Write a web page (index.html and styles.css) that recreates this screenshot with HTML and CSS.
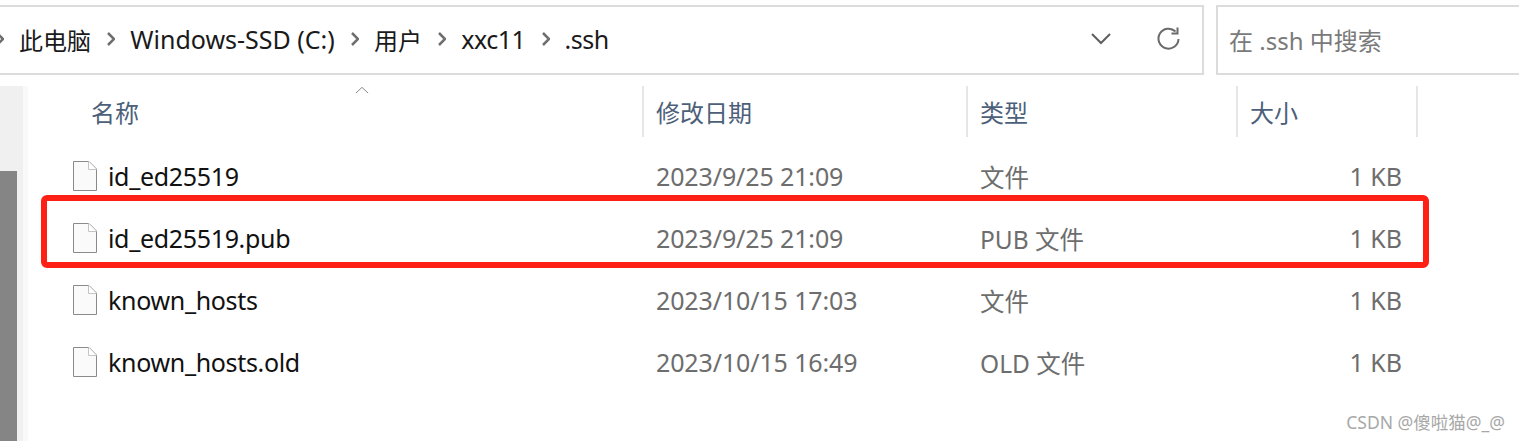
FILE: index.html
```html
<!DOCTYPE html>
<html lang="en">

<head>
    <meta charset="UTF-8">
    <title>.ssh</title>
    <link rel="stylesheet" href="styles.css">
</head>

<body>
    <svg class="defs" width="0" height="0">
        <symbol id="file-icon" viewBox="0 0 24 30">
            <path d="M1 .5H16L23.5 8V29.500H.5V.5Z" fill="#fafafa" stroke="#8a8a8a" />
            <path d="M15.500 .5V8.500H23.500" fill="#fff" stroke="#c4c4c4" />
        </symbol>
    </svg>

    <header class="toolbar">
        <div class="address">
            <svg class="crumb-arrow first" viewBox="0 0 8 14"><path d="M1 1L7 7L1 13" /></svg>
            <span class="crumb cjk">此电脑</span>
            <svg class="crumb-arrow" viewBox="0 0 8 14"><path d="M1 1L7 7L1 13" /></svg>
            <span class="crumb">Windows-SSD (C:)</span>
            <svg class="crumb-arrow" viewBox="0 0 8 14"><path d="M1 1L7 7L1 13" /></svg>
            <span class="crumb cjk">用户</span>
            <svg class="crumb-arrow" viewBox="0 0 8 14"><path d="M1 1L7 7L1 13" /></svg>
            <span class="crumb tight">xxc11</span>
            <svg class="crumb-arrow" viewBox="0 0 8 14"><path d="M1 1L7 7L1 13" /></svg>
            <span class="crumb tight">.ssh</span>
            <svg class="chevron" viewBox="0 0 20 12"><path d="M1 1L10 10L19 1" /></svg>
            <svg class="refresh" viewBox="0 0 24 24">
                <path d="M21.500 12A10 10 0 1 1 18.500 4.500" />
                <path d="M20.500 .5V6.500H14.500" />
            </svg>
        </div>
        <div class="search">在 .ssh 中搜索</div>
    </header>

    <div class="main">
        <aside class="side">
            <div class="scroll-track">
                <div class="scroll-thumb"></div>
            </div>
        </aside>

        <section class="files">
            <div class="sort-mark">
                <svg viewBox="0 0 16 8"><path d="M1 7.500L8 1L15 7.500" /></svg>
            </div>
            <div class="row head">
                <div class="col name">名称</div>
                <div class="col date">修改日期</div>
                <div class="col type">类型</div>
                <div class="col size">大小</div>
            </div>
            <div class="row item">
                <div class="col name"><svg class="file"><use href="#file-icon" /></svg>id_ed25519</div>
                <div class="col date">2023/9/25 21:09</div>
                <div class="col type">文件</div>
                <div class="col size">1 KB</div>
            </div>
            <div class="row item">
                <div class="col name"><svg class="file"><use href="#file-icon" /></svg>id_ed25519.pub</div>
                <div class="col date">2023/9/25 21:09</div>
                <div class="col type">PUB 文件</div>
                <div class="col size">1 KB</div>
            </div>
            <div class="row item">
                <div class="col name"><svg class="file"><use href="#file-icon" /></svg>known_hosts</div>
                <div class="col date">2023/10/15 17:03</div>
                <div class="col type">文件</div>
                <div class="col size">1 KB</div>
            </div>
            <div class="row item">
                <div class="col name"><svg class="file"><use href="#file-icon" /></svg>known_hosts.old</div>
                <div class="col date">2023/10/15 16:49</div>
                <div class="col type">OLD 文件</div>
                <div class="col size">1 KB</div>
            </div>
        </section>
    </div>

    <!-- red highlight drawn over the second row -->
    <div class="highlight"></div>
    <div class="watermark">CSDN @傻啦猫@_@</div>
</body>

</html>
```

FILE: styles.css
```css
/* Reset styles */
* {
    margin: 0;
    padding: 0;
    box-sizing: border-box;
}

body {
    width: 1519px;
    height: 441px;
    overflow: hidden;
    position: relative;
    background-color: #fff;
    font-family: "Noto Sans", "Noto Sans CJK SC", sans-serif;
    font-size: 25px;
}

.defs {
    position: absolute;
}

/* Toolbar */
.toolbar {
    display: flex;
    height: 86px;
    padding-top: 5px;
    gap: 12px;
}

.address {
    display: flex;
    align-items: center;
    width: 1204px;
    height: 70px;
    padding-bottom: 2px;
    border: 2px solid #dcdcdc;
    border-left: none;
    color: #1a1a1a;
}

.crumb {
    white-space: nowrap;
}

.crumb.cjk {
    font-size: 24px;
}

.crumb.tight {
    letter-spacing: -0.5px;
}

.crumb-arrow {
    width: 8px;
    height: 14px;
    margin: 0 15px 0 16.250px;
    flex: none;
}

.crumb-arrow.first {
    margin: 0 15px 0 -4px;
}

.crumb-arrow path {
    fill: none;
    stroke: #6e6e6e;
    stroke-width: 2.500;
}

.chevron {
    width: 20px;
    height: 12px;
    margin-left: auto;
    flex: none;
}

.chevron path {
    fill: none;
    stroke: #5f5f5f;
    stroke-width: 2;
}

.refresh {
    width: 24px;
    height: 24px;
    margin: 0 21px 0 46px;
    flex: none;
}

.refresh path {
    fill: none;
    stroke: #6a6a6a;
    stroke-width: 2;
}

.search {
    flex: 1;
    display: flex;
    align-items: center;
    height: 70px;
    padding: 0 0 2px 11px;
    border: 2px solid #dcdcdc;
    border-right: none;
    color: #7a7a7a;
    white-space: pre;
    font-size: 24px;
}

/* Main area */
.main {
    display: flex;
    height: 355px;
}

.side {
    width: 28px;
    flex: none;
    border-right: 5px solid #f9f9f9;
}

.scroll-track {
    height: 100%;
    padding-top: 85px;
    background-color: #f0f0f0;
}

.scroll-thumb {
    width: 17px;
    height: 100%;
    background-color: #858585;
}

.files {
    flex: 1;
    position: relative;
}

.sort-mark {
    position: absolute;
    left: 327px;
    top: 0;
    width: 14px;
    height: 8px;
}

.sort-mark svg {
    display: block;
    width: 14px;
    height: 8px;
}

.sort-mark path {
    fill: none;
    stroke: #777;
    stroke-width: 1;
}

.row {
    display: flex;
    align-items: center;
}

.col {
    display: flex;
    align-items: center;
    white-space: nowrap;
    height: 100%;
}

.name {
    width: 614px;
    padding-left: 45px;
}

.date {
    width: 324px;
    padding-left: 12px;
}

.type {
    width: 270px;
    padding-left: 12px;
}

.size {
    width: 182px;
    padding: 0 16px 0 12px;
}

.head {
    height: 51px;
    margin-bottom: 8px;
    color: #4c607a;
    font-size: 24px;
}

.head .col {
    border-left: 2px solid #e6e6e6;
}

.head .name {
    padding-left: 63px;
    border-left: none;
}

.head .size {
    border-right: 2px solid #e6e6e6;
}

.item {
    height: 62px;
    color: #6d6d6d;
}

.item .name {
    color: #111;
    letter-spacing: -0.33px;
}

.item .date {
    padding-left: 14px;
    letter-spacing: -0.12px;
}

.item .type {
    padding-left: 14px;
    font-size: 24.500px;
}

.item .size {
    justify-content: flex-end;
}

.file {
    width: 24px;
    height: 30px;
    margin-right: 11px;
    flex: none;
}

/* Overlays */
.highlight {
    position: absolute;
    left: 41px;
    top: 195px;
    width: 1388px;
    height: 73px;
    border: 6px solid #ff2015;
    border-radius: 6px;
}

.watermark {
    position: absolute;
    right: 14px;
    top: 409px;
    font-size: 17.500px;
    color: #a8a8a8;
}
```
